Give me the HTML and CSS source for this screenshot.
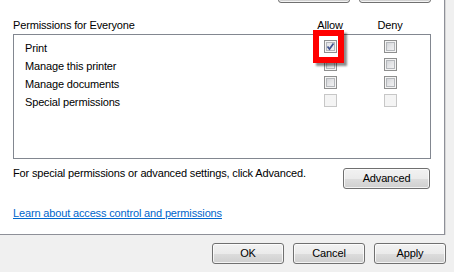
FILE: index.html
```html
<!DOCTYPE html>
<html lang="en">
<head>
    <meta charset="UTF-8">
    <title>Printer Security</title>
    <link rel="stylesheet" href="styles.css">
</head>
<body>

<div class="panel">
    <div class="top-buttons">
        <button class="btn" aria-label="Add"></button>
        <button class="btn" aria-label="Remove"></button>
    </div>

    <div class="perm-head">
        <span>Permissions for Everyone</span>
        <span class="col">Allow</span>
        <span class="col">Deny</span>
    </div>

    <div class="listbox">
        <div class="row">
            <span>Print</span>
            <span class="col">
                <span class="cb checked highlight">
                    <svg width="11" height="11" viewBox="0 0 11 11"><path d="M2.5 5.5 L4.5 8 L8.5 2.5" fill="none" stroke="#3f5290" stroke-width="1.7"/></svg>
                </span>
            </span>
            <span class="col"><span class="cb"></span></span>
        </div>
        <div class="row">
            <span>Manage this printer</span>
            <span class="col"><span class="cb"></span></span>
            <span class="col"><span class="cb"></span></span>
        </div>
        <div class="row">
            <span>Manage documents</span>
            <span class="col"><span class="cb"></span></span>
            <span class="col"><span class="cb"></span></span>
        </div>
        <div class="row">
            <span>Special permissions</span>
            <span class="col"><span class="cb disabled"></span></span>
            <span class="col"><span class="cb disabled"></span></span>
        </div>
    </div>

    <div class="note">
        <span>For special permissions or advanced settings, click Advanced.</span>
        <button class="btn btn-advanced">Advanced</button>
    </div>

    <a class="link" href="#">Learn about access control and permissions</a>
</div>

<div class="actions">
    <button class="btn">OK</button>
    <button class="btn">Cancel</button>
    <button class="btn">Apply</button>
</div>

</body>
</html>
```

FILE: styles.css
```css
body {
    font-family: "Liberation Sans", Arial, sans-serif;
    font-size: 11px;
    letter-spacing: -0.15px;
    color: #000;
    margin: 0;
    padding: 0;
    background-color: #f0f0f0;
    overflow: hidden;
}
.panel {
    box-sizing: border-box;
    width: 445px;
    height: 235px;
    background-color: #ffffff;
    border-right: 1px solid #8e9098;
    border-bottom: 1px solid #8e9098;
    box-shadow: 1px 0 0 #d6d6d6;
    overflow: hidden;
}
.top-buttons {
    display: flex;
    justify-content: flex-end;
    gap: 9px;
    padding-right: 13px;
    margin-top: -18px;
}
.btn {
    box-sizing: border-box;
    width: 72px;
    height: 21px;
    padding: 0;
    font-family: inherit;
    font-size: 11px;
    letter-spacing: -0.15px;
    line-height: 19px;
    color: #000;
    border: 1px solid #707070;
    border-radius: 3px;
    background: linear-gradient(#f2f2f2 0%, #ebebeb 50%, #dddddd 51%, #cfcfcf 100%);
    box-shadow: inset 0 0 0 1px rgba(255, 255, 255, 0.75);
}
.perm-head {
    display: grid;
    grid-template-columns: 1fr 60px 60px;
    margin-top: 13px;
    padding: 0 24px 0 13px;
    line-height: 18px;
}
.col {
    text-align: center;
}
.listbox {
    box-sizing: border-box;
    height: 125px;
    margin: 0 13px;
    padding-top: 4px;
    border: 1px solid #828790;
}
.row {
    display: grid;
    grid-template-columns: 1fr 60px 60px;
    padding: 0 10px 0 11px;
    height: 18px;
    line-height: 18px;
}
.row .col {
    display: flex;
    justify-content: center;
    padding-top: 1px;
}
.cb {
    position: relative;
    box-sizing: border-box;
    width: 13px;
    height: 13px;
    border: 1px solid #8e8f8f;
    background: linear-gradient(135deg, #c9ccd1 0%, #e4e5e7 50%, #f7f7f7 100%);
    box-shadow: inset 0 0 0 1px #f4f4f4, inset 0 0 0 2px #b4b7bb;
}
.cb svg {
    display: block;
}
.cb.checked {
    background: linear-gradient(135deg, #dfe1e5 0%, #f2f2f3 100%);
}
.cb.disabled {
    border-color: #c7c7c7;
    background: #f4f4f4;
    box-shadow: none;
}
/* red marker drawn over the Allow box */
.highlight::after {
    content: "";
    position: absolute;
    z-index: 1;
    left: -12px;
    top: -11px;
    box-sizing: border-box;
    width: 31px;
    height: 33px;
    border: 6px solid #ff0000;
    box-shadow: 3px 3px 2px rgba(0, 0, 0, 0.45);
}
.note {
    display: flex;
    justify-content: space-between;
    align-items: flex-start;
    margin-top: 5px;
    padding: 0 14px 0 13px;
    line-height: 18px;
}
.btn-advanced {
    width: 87px;
    margin-top: 4px;
}
.link {
    display: inline-block;
    margin: 15px 0 0 13px;
    line-height: 18px;
    color: #0066cc;
}
.actions {
    display: flex;
    justify-content: flex-end;
    gap: 9px;
    margin-top: 8px;
    padding-right: 8px;
}
```
